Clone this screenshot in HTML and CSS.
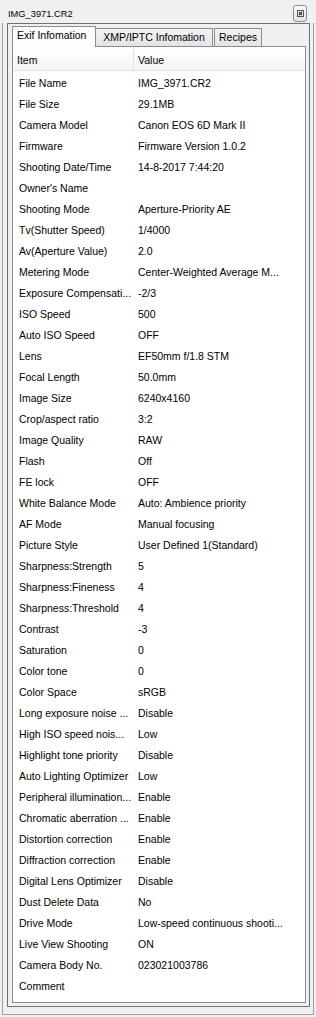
FILE: index.html
```html
<!DOCTYPE html>
<html lang="en">
<head>
    <meta charset="UTF-8">
    <meta name="viewport" content="width=device-width, initial-scale=1.0">
    <title>IMG_3971.CR2</title>
    <link rel="stylesheet" href="styles.css">
</head>
<body>
    <div class="titlebar">
        <div class="title">IMG_3971.CR2</div>
        <div class="close">
            <svg width="7" height="7" viewBox="0 0 7 7">
                <rect x="0.5" y="0.5" width="6" height="6" fill="none" stroke="#555" stroke-width="1"/>
                <path d="M2 2 L5 5 M5 2 L2 5" stroke="#333" stroke-width="1.2"/>
            </svg>
        </div>
    </div>
    <div class="frame">
        <div class="group">
            <div class="tabs">
                <div class="tab active">Exif Infomation</div>
                <div class="tab xmp">XMP/IPTC Infomation</div>
                <div class="tab recipes">Recipes</div>
            </div>
            <div class="panel">
                <div class="list">
                    <div class="header">
                        <div class="hcell item">Item</div>
                        <div class="hcell value">Value</div>
                    </div>
                    <div class="rows" id="rows"></div>
                </div>
            </div>
        </div>
    </div>

    <script>
        const data = [
            ['File Name', 'IMG_3971.CR2'],
            ['File Size', '29.1MB'],
            ['Camera Model', 'Canon EOS 6D Mark II'],
            ['Firmware', 'Firmware Version 1.0.2'],
            ['Shooting Date/Time', '14-8-2017 7:44:20'],
            ["Owner's Name", ''],
            ['Shooting Mode', 'Aperture-Priority AE'],
            ['Tv(Shutter Speed)', '1/4000'],
            ['Av(Aperture Value)', '2.0'],
            ['Metering Mode', 'Center-Weighted Average M...'],
            ['Exposure Compensati...', '-2/3'],
            ['ISO Speed', '500'],
            ['Auto ISO Speed', 'OFF'],
            ['Lens', 'EF50mm f/1.8 STM'],
            ['Focal Length', '50.0mm'],
            ['Image Size', '6240x4160'],
            ['Crop/aspect ratio', '3:2'],
            ['Image Quality', 'RAW'],
            ['Flash', 'Off'],
            ['FE lock', 'OFF'],
            ['White Balance Mode', 'Auto: Ambience priority'],
            ['AF Mode', 'Manual focusing'],
            ['Picture Style', 'User Defined 1(Standard)'],
            ['Sharpness:Strength', '5'],
            ['Sharpness:Fineness', '4'],
            ['Sharpness:Threshold', '4'],
            ['Contrast', '-3'],
            ['Saturation', '0'],
            ['Color tone', '0'],
            ['Color Space', 'sRGB'],
            ['Long exposure noise ...', 'Disable'],
            ['High ISO speed nois...', 'Low'],
            ['Highlight tone priority', 'Disable'],
            ['Auto Lighting Optimizer', 'Low'],
            ['Peripheral illumination...', 'Enable'],
            ['Chromatic aberration ...', 'Enable'],
            ['Distortion correction', 'Enable'],
            ['Diffraction correction', 'Enable'],
            ['Digital Lens Optimizer', 'Disable'],
            ['Dust Delete Data', 'No'],
            ['Drive Mode', 'Low-speed continuous shooti...'],
            ['Live View Shooting', 'ON'],
            ['Camera Body No.', '023021003786'],
            ['Comment', '']
        ];

        const rows = document.getElementById('rows');
        data.forEach(([item, value]) => {
            const row = document.createElement('div');
            row.className = 'row';
            row.innerHTML = '<div class="cell item"></div><div class="cell value"></div>';
            row.children[0].textContent = item;
            row.children[1].textContent = value;
            rows.appendChild(row);
        });
    </script>
</body>
</html>
```

FILE: styles.css
```css
body {
    margin: 0;
    background: #f0f0f0;
    font-family: "Liberation Sans", Arial, sans-serif;
    font-size: 10.5px;
    color: #000;
    width: 316px;
    height: 1017px;
    overflow: hidden;
}
.titlebar {
    display: flex;
    justify-content: space-between;
    align-items: flex-start;
    height: 23px;
}
.title {
    font-size: 9.3px;
    padding: 8px 0 0 8px;
    line-height: 12px;
}
.close {
    width: 14px;
    height: 17px;
    box-sizing: border-box;
    margin: 5px 9px 0 0;
    border: 1px solid #8d8d8d;
    border-radius: 3px;
    background: linear-gradient(#fafafa, #e4e4e4);
    display: flex;
    justify-content: center;
    align-items: center;
}
.close svg {
    display: block;
}
.frame {
    margin: 0 2px 0 2px;
    height: 988px;
    border-left: 1px solid #a0a0a0;
    border-right: 1px solid #a0a0a0;
    border-bottom: 1px solid #a0a0a0;
    padding: 0 3px 3px 4px;
}
.group {
    height: 984px;
    box-sizing: border-box;
    border: 1px solid #707070;
    padding: 2px 3px 3px 4px;
    display: flex;
    flex-direction: column;
}
.tabs {
    display: flex;
    align-items: flex-end;
    height: 20px;
}
.tab {
    box-sizing: border-box;
    height: 18px;
    border: 1px solid #898c95;
    border-bottom: none;
    background: linear-gradient(#f3f3f3, #e4e4e4);
    padding-top: 2px;
    line-height: 13px;
    text-align: center;
    white-space: nowrap;
}
.tab.active {
    position: relative;
    z-index: 1;
    width: 84px;
    height: 21px;
    margin-bottom: -1px;
    background: #fcfcfc;
    text-align: left;
    padding-left: 4px;
}
.tab.xmp {
    width: 117px;
    border-left: none;
}
.tab.recipes {
    width: 48px;
    margin-left: 1px;
}
.panel {
    flex: 1;
    border: 1px solid #898c95;
    background: #fff;
    overflow: hidden;
}
.header {
    display: grid;
    grid-template-columns: 121px 1fr;
    height: 24px;
    box-sizing: border-box;
    border-bottom: 1px solid #e2e3e5;
    background: linear-gradient(#ffffff, #f4f5f7);
}
.hcell {
    padding-top: 3px;
    line-height: 20px;
}
.hcell.item {
    padding-left: 4px;
    border-right: 1px solid #e2e3e5;
}
.hcell.value {
    padding-left: 4px;
}
.row {
    display: grid;
    grid-template-columns: 121px 1fr;
    height: 21px;
    box-sizing: border-box;
    padding-top: 3px;
    line-height: 18px;
}
.cell {
    white-space: nowrap;
    overflow: hidden;
}
.cell.item {
    padding-left: 6px;
}
.cell.value {
    padding-left: 4px;
}
```
